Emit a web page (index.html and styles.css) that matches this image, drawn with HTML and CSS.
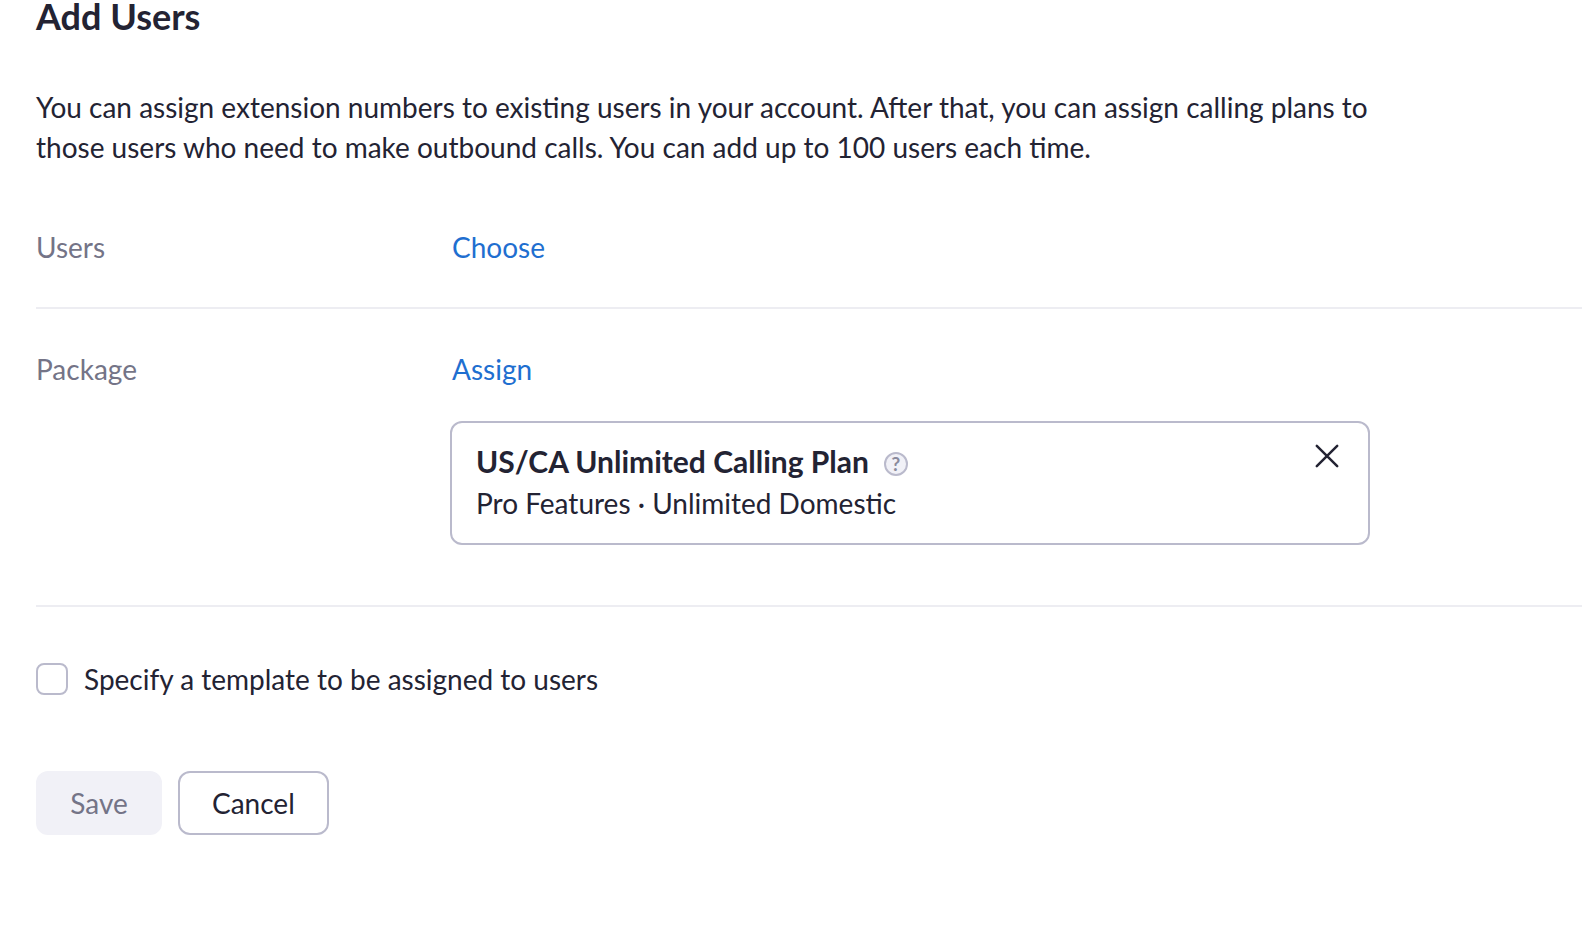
FILE: index.html
```html
<!DOCTYPE html>
<html lang="en">
<head>
  <meta charset="UTF-8" />
  <meta name="viewport" content="width=device-width, initial-scale=1.0"/>
  <title>Add Users</title>
  <link rel="stylesheet" href="styles.css">
</head>
<body>
  <form class="add-users">
    <h1>Add Users</h1>
    <p class="intro">You can assign extension numbers to existing users in your account. After that, you can assign calling plans to those users who need to make outbound calls. You can add up to 100 users each time.</p>

    <div class="row">
      <div class="row-label">Users</div>
      <div class="row-content">
        <a class="action" href="#">Choose</a>
      </div>
    </div>

    <div class="row package">
      <div class="row-label">Package</div>
      <div class="row-content">
        <a class="action" href="#">Assign</a>
        <div class="plan">
          <div class="plan-info">
            <div class="plan-title">
              <strong>US/CA Unlimited Calling Plan</strong>
              <button type="button" class="help" aria-label="Help">?</button>
            </div>
            <div class="plan-features">Pro Features · Unlimited Domestic</div>
          </div>
          <button type="button" class="remove" aria-label="Remove">
            <svg width="24" height="24" viewBox="0 0 24 24" fill="none" stroke="currentColor" stroke-width="2.5" stroke-linecap="round">
              <path d="M1.8 1.8l20.4 20.4M22.2 1.8l-20.4 20.4"/>
            </svg>
          </button>
        </div>
      </div>
    </div>

    <div class="template">
      <input type="checkbox" id="template">
      <label for="template">Specify a template to be assigned to users</label>
    </div>

    <div class="buttons">
      <button type="submit" class="btn save" disabled>Save</button>
      <button type="button" class="btn cancel">Cancel</button>
    </div>
  </form>
</body>
</html>
```
FILE: styles.css
```css
body {
  margin: 0;
  background: #fff;
  color: #232333;
  font-family: Lato, sans-serif;
  font-size: 28px;
  line-height: 40px;
}

.add-users {
  padding-left: 36px;
}

h1 {
  margin: 0;
  font-size: 36px;
  line-height: 32px;
  font-weight: bold;
}

.intro {
  max-width: 1344px;
  margin: 55px 0 20px;
}

.row {
  display: flex;
  padding: 40px 0;
  border-bottom: 2px solid #ededf2;
}

.row-label {
  flex: 0 0 416px;
  color: #747487;
}

.row-content {
  flex: 1;
}

.action {
  color: #1f6fd0;
  text-decoration: none;
}

.package {
  padding-bottom: 60px;
}

.plan {
  display: flex;
  justify-content: space-between;
  align-items: flex-start;
  box-sizing: border-box;
  max-width: 920px;
  margin: 32px 0 0 -2px;
  padding: 20px 29px 20px 24px;
  border: 2px solid #babacc;
  border-radius: 12px;
}

.plan-title {
  display: flex;
  align-items: center;
  gap: 15px;
  margin-bottom: 4px;
  font-size: 30px;
  line-height: 36px;
}

.help {
  width: 24px;
  height: 24px;
  margin-top: 6px;
  padding: 0;
  border: 2px solid #babacc;
  border-radius: 50%;
  background: #f1f1f7;
  color: #8a8a9c;
  font: bold 19px/20px Lato, sans-serif;
}

.remove {
  display: flex;
  margin-top: 1px;
  padding: 0;
  border: none;
  background: none;
  color: #232333;
}

.template {
  display: flex;
  align-items: center;
  gap: 16px;
  margin-top: 52px;
}

.template input {
  appearance: none;
  width: 32px;
  height: 32px;
  margin: 0;
  border: 2px solid #babacc;
  border-radius: 8px;
}

.buttons {
  display: flex;
  gap: 16px;
  margin-top: 72px;
}

.btn {
  height: 64px;
  min-width: 126px;
  padding: 0 32px;
  border: 2px solid #babacc;
  border-radius: 12px;
  background: #fff;
  color: #232333;
  font: 28px/40px Lato, sans-serif;
}

.save {
  border-color: #f1f1f7;
  background: #f1f1f7;
  color: #747487;
}
```
